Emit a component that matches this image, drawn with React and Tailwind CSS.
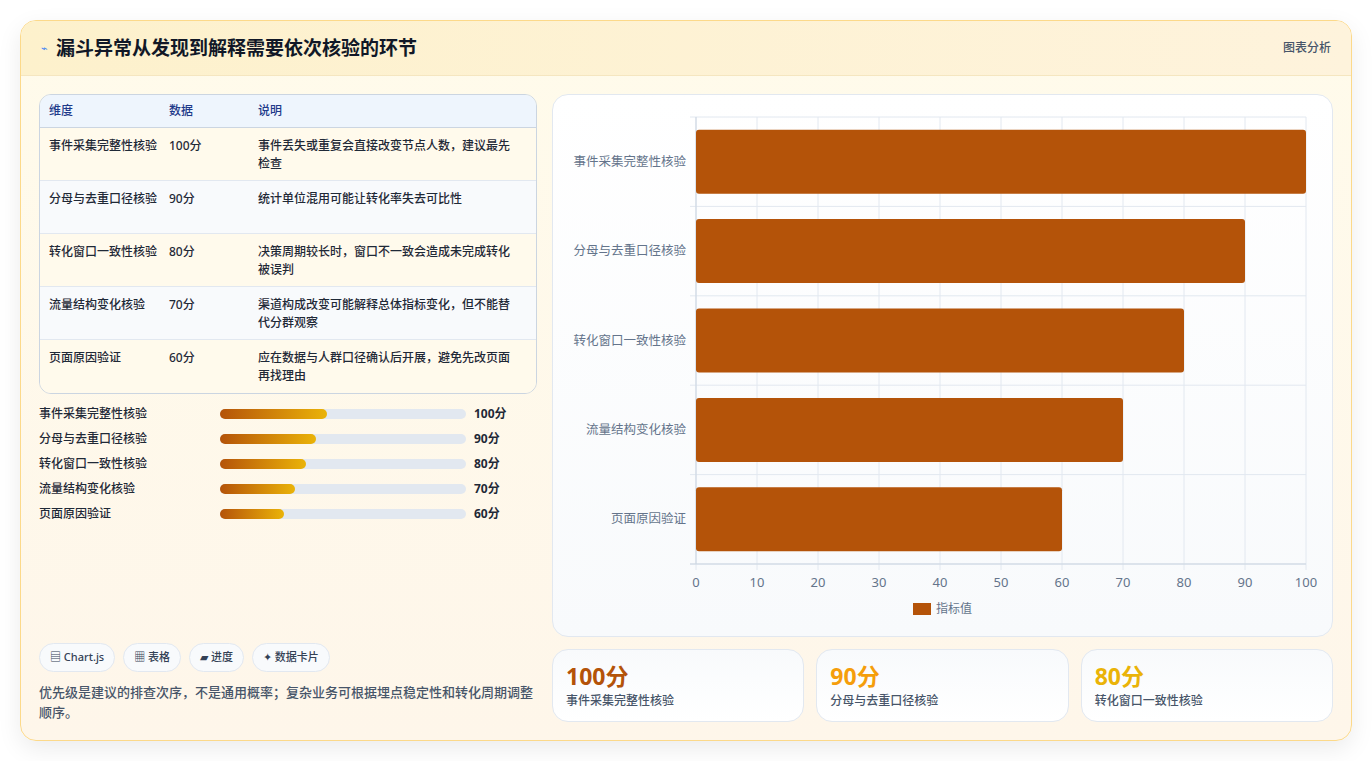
const rows = [
  ["事件采集完整性核验", 100, "事件丢失或重复会直接改变节点人数，建议最先检查"],
  ["分母与去重口径核验", 90, "统计单位混用可能让转化率失去可比性"],
  ["转化窗口一致性核验", 80, "决策周期较长时，窗口不一致会造成未完成转化被误判"],
  ["流量结构变化核验", 70, "渠道构成改变可能解释总体指标变化，但不能替代分群观察"],
  ["页面原因验证", 60, "应在数据与人群口径确认后开展，避免先改页面再找理由"],
];

function Chart() {
  const x0 = 143, x1 = 753, y0 = 22, y1 = 469;
  const step = (y1 - y0) / 5;
  return (
    <svg width="779" height="542" className="block">
      {Array.from({ length: 11 }).map((_, i) => {
        const x = x0 + (i * (x1 - x0)) / 10;
        return (
          <g key={i}>
            <line x1={x} x2={x} y1={y0} y2={y1 + 6} stroke="#e2e8f0" />
            <text x={x} y={492} textAnchor="middle" fontSize="13" fill="#64748b">{i * 10}</text>
          </g>
        );
      })}
      {Array.from({ length: 6 }).map((_, i) => (
        <line key={i} x1={x0 - 6} x2={x1} y1={y0 + i * step} y2={y0 + i * step} stroke="#e2e8f0" />
      ))}
      <line x1={x0} x2={x0} y1={y0} y2={y1} stroke="#cbd5e1" />
      <line x1={x0 - 6} x2={x1} y1={y1} y2={y1} stroke="#cbd5e1" />
      {rows.map((r, i) => {
        const cy = y0 + step * i + step / 2;
        return (
          <g key={i}>
            <rect x={x0} y={cy - 32} width={(r[1] / 100) * (x1 - x0)} height={64} rx="3" fill="#b45309" />
            <text x={133} y={cy + 4} textAnchor="end" fontSize="12.5" fill="#64748b">{r[0]}</text>
          </g>
        );
      })}
      <rect x={360} y={508} width={18} height={12} fill="#b45309" />
      <text x={383} y={518} fontSize="12" fill="#64748b">指标值</text>
    </svg>
  );
}

export default function App() {
  return (
    <div className="min-h-[761px] bg-white p-5" style={{ fontFamily: '"Noto Sans", "Noto Sans CJK SC", sans-serif' }}>
      <div className="rounded-2xl border border-[#fcd98a] bg-gradient-to-b from-[#fffbeb] to-[#fef6ea] shadow-[0_8px_24px_rgba(0,0,0,0.08)] overflow-hidden">
        <div className="h-[55px] flex items-center justify-between px-5 bg-gradient-to-r from-[#fdf1cc] to-[#fef3dc] border-b border-[#f5e6c0]">
          <div className="flex items-center gap-2">
            <span className="text-[11px] text-[#3b82f6]">⌁</span>
            <span className="text-[19px] font-bold text-[#111827]">漏斗异常从发现到解释需要依次核验的环节</span>
          </div>
          <span className="text-xs text-[#475569] font-medium">图表分析</span>
        </div>
        <div className="flex gap-[15px] p-[18px] h-[664px]">
          <div className="w-[499px] flex flex-col">
            <div className="rounded-xl border border-[#cbd5e1] overflow-hidden text-xs">
              <div className="grid grid-cols-[120px_89px_1fr] bg-[#eef5fd] h-[33px] items-center px-[9px] text-[#1e3a8a] font-medium border-b border-[#cbd5e1]">
                <span>维度</span><span>数据</span><span>说明</span>
              </div>
              {rows.map((r, i) => (
                <div key={i} className={`grid grid-cols-[120px_89px_1fr] px-[9px] pt-[9px] h-[53px] text-[#1f2937] font-medium leading-[18px] ${i < 4 ? "border-b border-[#e2e8f0]" : ""} ${i % 2 ? "bg-[#f8fafc]" : "bg-[#fffaec]"}`}>
                  <span className="pr-3">{r[0]}</span><span>{r[1]}分</span><span className="pr-3">{r[2]}</span>
                </div>
              ))}
            </div>
            <div className="mt-[12px] flex flex-col gap-[9px]">
              {rows.map((r, i) => (
                <div key={i} className="flex items-center h-4 text-xs text-[#1f2937] font-medium">
                  <span className="w-[181px]">{r[0]}</span>
                  <div className="w-[246px] h-[10px] rounded-full bg-[#e2e8f0]">
                    <div className="h-full rounded-full bg-gradient-to-r from-[#b45309] to-[#eab308]" style={{ width: `${r[1] * 0.435}%` }} />
                  </div>
                  <span className="ml-2 font-bold">{r[1]}分</span>
                </div>
              ))}
            </div>
            <div className="mt-auto">
              <div className="flex gap-2">
                {["▤ Chart.js", "▦ 表格", "▰ 进度", "✦ 数据卡片"].map((t) => (
                  <span key={t} className="h-[29px] px-[10px] rounded-full bg-[#f8fafc] border border-[#e2e8f0] text-[11px] font-medium text-[#334155] flex items-center">{t}</span>
                ))}
              </div>
              <p className="mt-[10px] text-[13px] leading-5 text-[#475569] font-medium">优先级是建议的排查次序，不是通用概率；复杂业务可根据埋点稳定性和转化周期调整顺序。</p>
            </div>
          </div>
          <div className="flex-1 flex flex-col gap-3">
            <div className="h-[543px] rounded-2xl border border-[#e2e8f0] bg-gradient-to-b from-white to-[#f8fafc] overflow-hidden">
              <Chart />
            </div>
            <div className="grid grid-cols-3 gap-3">
              {[["100分", "#b45309", rows[0][0]], ["90分", "#f59e0b", rows[1][0]], ["80分", "#eab308", rows[2][0]]].map(([v, c, l]) => (
                <div key={v} className="h-[73px] rounded-2xl border border-[#e2e8f0] bg-gradient-to-b from-[#f8fafc] to-white px-[13px] pt-[10px]">
                  <div className="text-[23px] font-bold leading-8" style={{ color: c }}>{v}</div>
                  <div className="text-xs text-[#475569] font-medium mt-[1px]">{l}</div>
                </div>
              ))}
            </div>
          </div>
        </div>
      </div>
    </div>
  );
}
